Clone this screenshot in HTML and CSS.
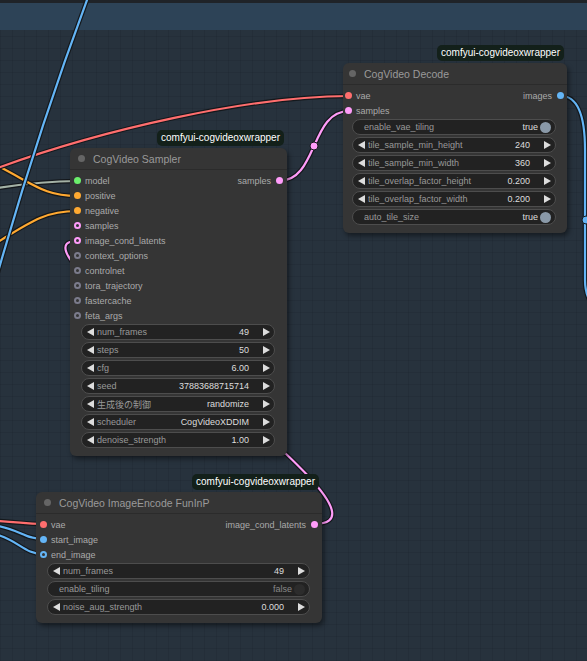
FILE: index.html
```html
<!DOCTYPE html>
<html lang="ja">
<head>
    <meta charset="UTF-8">
    <meta name="viewport" content="width=device-width, initial-scale=1.0">
    <title>CogVideo - Workflow</title>
    <link rel="stylesheet" href="styles.css">
</head>
<body>

<div class="canvas">
    <div class="group-bar"></div>

    <!-- links are drawn under the nodes -->
    <svg class="links" width="587" height="661" viewBox="0 0 587 661" aria-hidden="true">
        <defs>
            <path id="w-image-top" d="M90,-8 Q40,125 -2,272"/>
            <path id="w-vae-top" d="M-5,169 C100,130 250,96 349,96"/>
            <path id="w-model" d="M-2,188 C30,183 50,181 77,181"/>
            <path id="w-pos" d="M-2,166 C35,185 45,196 77,196"/>
            <path id="w-neg" d="M-2,242 C30,222 45,211 77,211"/>
            <path id="w-samples" d="M279,181 C318,181 310,111 349,111"/>
            <path id="w-cond" d="M314,524 C425,524 -10,241 77,241"/>
            <path id="w-vae-enc" d="M-2,521 C20,522 25,524 43,524"/>
            <path id="w-start" d="M-2,526 C20,530 25,539 43,539"/>
            <path id="w-end" d="M-2,535 C20,542 25,554 43,554"/>
            <path id="w-images" d="M561,96 C578,96 585,115 585,150 L585,280 C585,295 590,305 600,312"/>
        </defs>

        <use class="edge" href="#w-model"/><use class="link model" href="#w-model"/>
        <use class="edge" href="#w-pos"/><use class="link cond" href="#w-pos"/>
        <use class="edge" href="#w-neg"/><use class="link cond" href="#w-neg"/>
        <use class="edge" href="#w-vae-top"/><use class="link vae" href="#w-vae-top"/>
        <use class="edge" href="#w-image-top"/><use class="link image" href="#w-image-top"/>
        <use class="edge" href="#w-samples"/><use class="link latent" href="#w-samples"/>
        <use class="edge" href="#w-cond"/><use class="link latent" href="#w-cond"/>
        <use class="edge" href="#w-vae-enc"/><use class="link vae" href="#w-vae-enc"/>
        <use class="edge" href="#w-start"/><use class="link image" href="#w-start"/>
        <use class="edge" href="#w-end"/><use class="link image" href="#w-end"/>
        <use class="edge" href="#w-images"/><use class="link image" href="#w-images"/>

        <circle class="mid latent" cx="314" cy="146" r="4"/>
        <circle class="mid image" cx="586" cy="220" r="4"/>
    </svg>

    <!-- CogVideo Decode -->
    <div class="node node-decode">
        <div class="badge">comfyui-cogvideoxwrapper</div>
        <div class="node-title"><span class="title-dot"></span>CogVideo Decode</div>
        <div class="slots">
            <div class="slot-col">
                <div class="slot"><i class="dot vae"></i>vae</div>
                <div class="slot"><i class="dot latent"></i>samples</div>
            </div>
            <div class="slot-col out">
                <div class="slot">images<i class="dot image"></i></div>
            </div>
        </div>
        <div class="widgets">
            <div class="widget toggle"><span class="w-label">enable_vae_tiling</span><span class="w-value">true</span><i class="knob"></i></div>
            <div class="widget"><i class="arrow left"></i><span class="w-label">tile_sample_min_height</span><span class="w-value">240</span><i class="arrow right"></i></div>
            <div class="widget"><i class="arrow left"></i><span class="w-label">tile_sample_min_width</span><span class="w-value">360</span><i class="arrow right"></i></div>
            <div class="widget"><i class="arrow left"></i><span class="w-label">tile_overlap_factor_height</span><span class="w-value">0.200</span><i class="arrow right"></i></div>
            <div class="widget"><i class="arrow left"></i><span class="w-label">tile_overlap_factor_width</span><span class="w-value">0.200</span><i class="arrow right"></i></div>
            <div class="widget toggle"><span class="w-label">auto_tile_size</span><span class="w-value">true</span><i class="knob"></i></div>
        </div>
    </div>

    <!-- CogVideo Sampler -->
    <div class="node node-sampler">
        <div class="badge">comfyui-cogvideoxwrapper</div>
        <div class="node-title"><span class="title-dot"></span>CogVideo Sampler</div>
        <div class="slots">
            <div class="slot-col">
                <div class="slot"><i class="dot model"></i>model</div>
                <div class="slot"><i class="dot cond"></i>positive</div>
                <div class="slot"><i class="dot cond"></i>negative</div>
                <div class="slot"><i class="dot ring latent"></i>samples</div>
                <div class="slot"><i class="dot ring latent"></i>image_cond_latents</div>
                <div class="slot"><i class="dot ring empty"></i>context_options</div>
                <div class="slot"><i class="dot ring empty"></i>controlnet</div>
                <div class="slot"><i class="dot ring empty"></i>tora_trajectory</div>
                <div class="slot"><i class="dot ring empty"></i>fastercache</div>
                <div class="slot"><i class="dot ring empty"></i>feta_args</div>
            </div>
            <div class="slot-col out">
                <div class="slot">samples<i class="dot latent"></i></div>
            </div>
        </div>
        <div class="widgets">
            <div class="widget"><i class="arrow left"></i><span class="w-label">num_frames</span><span class="w-value">49</span><i class="arrow right"></i></div>
            <div class="widget"><i class="arrow left"></i><span class="w-label">steps</span><span class="w-value">50</span><i class="arrow right"></i></div>
            <div class="widget"><i class="arrow left"></i><span class="w-label">cfg</span><span class="w-value">6.00</span><i class="arrow right"></i></div>
            <div class="widget"><i class="arrow left"></i><span class="w-label">seed</span><span class="w-value">37883688715714</span><i class="arrow right"></i></div>
            <div class="widget"><i class="arrow left"></i><span class="w-label">生成後の制御</span><span class="w-value">randomize</span><i class="arrow right"></i></div>
            <div class="widget"><i class="arrow left"></i><span class="w-label">scheduler</span><span class="w-value">CogVideoXDDIM</span><i class="arrow right"></i></div>
            <div class="widget"><i class="arrow left"></i><span class="w-label">denoise_strength</span><span class="w-value">1.00</span><i class="arrow right"></i></div>
        </div>
    </div>

    <!-- CogVideo ImageEncode FunInP -->
    <div class="node node-encode">
        <div class="badge">comfyui-cogvideoxwrapper</div>
        <div class="node-title"><span class="title-dot"></span>CogVideo ImageEncode FunInP</div>
        <div class="slots">
            <div class="slot-col">
                <div class="slot"><i class="dot vae"></i>vae</div>
                <div class="slot"><i class="dot image"></i>start_image</div>
                <div class="slot"><i class="dot ring image"></i>end_image</div>
            </div>
            <div class="slot-col out">
                <div class="slot">image_cond_latents<i class="dot latent"></i></div>
            </div>
        </div>
        <div class="widgets">
            <div class="widget"><i class="arrow left"></i><span class="w-label">num_frames</span><span class="w-value">49</span><i class="arrow right"></i></div>
            <div class="widget toggle"><span class="w-label">enable_tiling</span><span class="w-value off">false</span><i class="knob off"></i></div>
            <div class="widget"><i class="arrow left"></i><span class="w-label">noise_aug_strength</span><span class="w-value">0.000</span><i class="arrow right"></i></div>
        </div>
    </div>
</div>

</body>
</html>
```

FILE: styles.css
```css
* {
    box-sizing: border-box;
}

body {
    margin: 0;
    background-color: #27323d;
    font-family: "Liberation Sans", Arial, "Noto Sans CJK JP", sans-serif;
    overflow: hidden;
}

.canvas {
    position: relative;
    width: 587px;
    height: 661px;
    overflow: hidden;
    background-color: #27323d;
    background-image:
        linear-gradient(rgba(0, 0, 0, 0.07) 1px, transparent 1px),
        linear-gradient(90deg, rgba(0, 0, 0, 0.07) 1px, transparent 1px);
    background-size: 12px 12px;
}

.group-bar {
    height: 30px;
    background-color: #2d4357;
    border-top: 3px solid #1f2328;
}

/* links */
.links {
    position: absolute;
    left: 0;
    top: 0;
}

.links use {
    fill: none;
    stroke-linecap: round;
}

.edge {
    stroke: #14181c;
    stroke-width: 4.6;
}

.link {
    stroke-width: 2.2;
}

.link.vae { stroke: #ff6e6e; }
.link.latent { stroke: #ff9cf9; }
.link.image { stroke: #64b5f6; }
.link.cond { stroke: #ffa931; }
.link.model { stroke: #a4b2a6; }

.mid {
    stroke: #14181c;
    stroke-width: 1;
}
.mid.latent { fill: #ff9cf9; }
.mid.image { fill: #64b5f6; }

/* nodes */
.node {
    position: absolute;
    background-color: #353535;
    border-radius: 6px;
    box-shadow: 2px 3px 5px rgba(0, 0, 0, 0.45);
    color: #aaaaaa;
    font-size: 9px;
    padding-bottom: 8px;
}

.node-decode {
    left: 343px;
    top: 63px;
    width: 224px;
}

.node-sampler {
    left: 70px;
    top: 148px;
    width: 217px;
}

.node-encode {
    left: 36px;
    top: 492px;
    width: 286px;
}

.badge {
    position: absolute;
    right: 3px;
    bottom: calc(100% + 2px);
    background-color: #13201a;
    color: #ffffff;
    font-size: 10px;
    line-height: 16px;
    padding: 0 4px;
    border-radius: 5px;
    white-space: nowrap;
}

.node-title {
    height: 22px;
    display: flex;
    align-items: center;
    padding-left: 8px;
    font-size: 10.5px;
    color: #9a9a9a;
    border-bottom: 1px solid #2b2b2b;
    white-space: nowrap;
}

.title-dot {
    width: 7px;
    height: 7px;
    border-radius: 50%;
    background-color: #656565;
    margin-right: 8px;
}

.node-decode .node-title {
    padding-left: 6px;
}

/* slots */
.slots {
    display: flex;
    justify-content: space-between;
    padding: 3px 4px 0;
}

.slot {
    height: 15px;
    display: flex;
    align-items: center;
    gap: 4px;
    white-space: nowrap;
}

.slot-col.out .slot {
    justify-content: flex-end;
    gap: 5px;
}

.node-decode .slots {
    padding: 3px 3px 0 2px;
}

.dot {
    width: 7px;
    height: 7px;
    border-radius: 50%;
    flex: none;
}

.dot.vae { background-color: #ff6e6e; }
.dot.latent { background-color: #ff9cf9; }
.dot.image { background-color: #64b5f6; }
.dot.cond { background-color: #ffa931; }
.dot.model { background-color: #6cef6c; }

.dot.ring {
    background-color: #353535;
    border: 2px solid #7b7b8b;
}
.dot.ring.latent { border-color: #ff9cf9; }
.dot.ring.image { border-color: #64b5f6; }

/* widgets */
.widgets {
    display: flex;
    flex-direction: column;
    gap: 2px;
    padding: 1px 12px 0 11px;
}

.node-decode .widgets {
    padding: 1px 11px 0 9px;
}

.widget {
    height: 16px;
    display: flex;
    align-items: center;
    background-color: #222222;
    border: 1px solid #4d4d4d;
    border-radius: 8px;
    padding: 0 4px 0 5px;
    white-space: nowrap;
}

.widget.toggle {
    padding-left: 11px;
}

.arrow {
    width: 0;
    height: 0;
    border-top: 4px solid transparent;
    border-bottom: 4px solid transparent;
    flex: none;
}

.arrow.left {
    border-right: 7px solid #dddddd;
    margin-right: 3px;
}

.arrow.right {
    border-left: 7px solid #dddddd;
    margin-left: 14px;
}

.w-label {
    flex: 1;
    color: #999999;
    overflow: hidden;
}

.w-value {
    color: #dddddd;
}

.w-value.off {
    color: #888888;
}

.knob {
    width: 11px;
    height: 11px;
    border-radius: 50%;
    background-color: #8a99a8;
    margin-left: 2px;
    flex: none;
}

.knob.off {
    background-color: #2c2c2c;
}
```
